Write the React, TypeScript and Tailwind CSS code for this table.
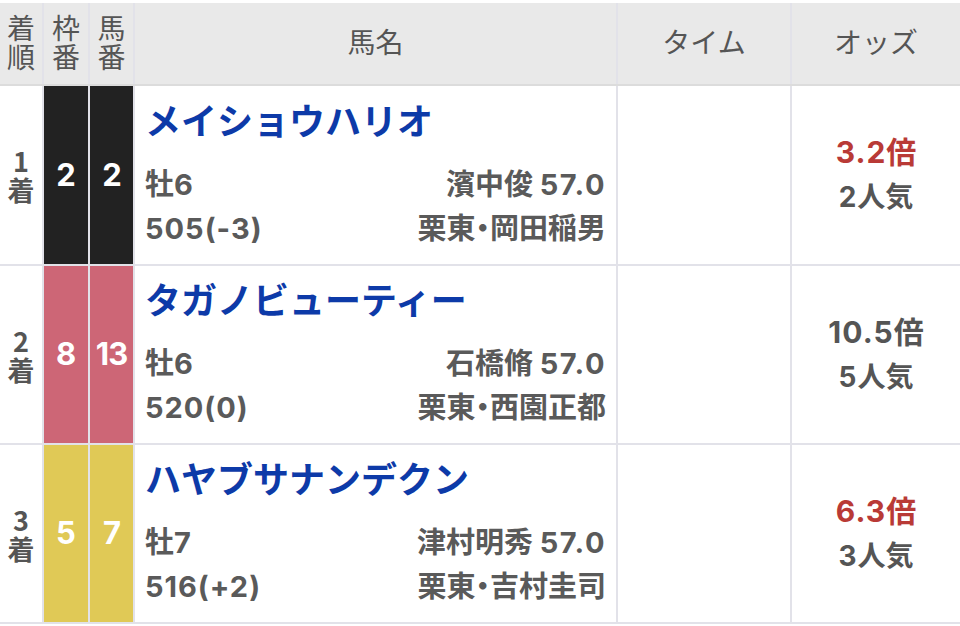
import React from 'react'

type Row = {
    rank: number
    frame: number
    num: number
    frameClass: string
    name: string
    sex: string
    weight: string
    jockey: string
    load: string
    stable: string
    trainer: string
    odds: string
    pop: number
    hot: boolean
    height: string
}

const rows: Row[] = [
    {
        rank: 1,
        frame: 2,
        num: 2,
        frameClass: 'bg-[#222222]',
        name: 'メイショウハリオ',
        sex: '牡6',
        weight: '505(-3)',
        jockey: '濱中俊',
        load: '57.0',
        stable: '栗東',
        trainer: '岡田稲男',
        odds: '3.2',
        pop: 2,
        hot: true,
        height: 'h-[180px]'
    },
    {
        rank: 2,
        frame: 8,
        num: 13,
        frameClass: 'bg-[#cd6676]',
        name: 'タガノビューティー',
        sex: '牡6',
        weight: '520(0)',
        jockey: '石橋脩',
        load: '57.0',
        stable: '栗東',
        trainer: '西園正都',
        odds: '10.5',
        pop: 5,
        hot: false,
        height: 'h-[179px]'
    },
    {
        rank: 3,
        frame: 5,
        num: 7,
        frameClass: 'bg-[#e0c956]',
        name: 'ハヤブサナンデクン',
        sex: '牡7',
        weight: '516(+2)',
        jockey: '津村明秀',
        load: '57.0',
        stable: '栗東',
        trainer: '吉村圭司',
        odds: '6.3',
        pop: 3,
        hot: true,
        height: 'h-[179px]'
    }
]

const font = "font-['Inter','Noto_Sans_CJK_JP',sans-serif]"

export default function App() {
    return (
        <div className={`w-[960px] h-[626px] bg-white pt-[3px] ${font}`}>
            {/* header */}
            <div className="flex h-[83px] bg-[#e9e9e9] border-b-2 border-[#dcdcdc] text-[28px] leading-[29px] text-[#555555] font-normal">
                <div className="w-[44px] shrink-0 border-r-2 border-[#e2e2e9] flex items-center justify-center text-center px-[7px]">
                    着順
                </div>
                <div className="w-[46px] shrink-0 border-r-2 border-[#e2e2e9] flex items-center justify-center text-center px-[8px]">
                    枠番
                </div>
                <div className="w-[45px] shrink-0 border-r-2 border-[#e2e2e9] flex items-center justify-center text-center px-[7px]">
                    馬番
                </div>
                <div className="w-[483px] shrink-0 border-r-2 border-[#e2e2e9] flex items-center justify-center">
                    馬名
                </div>
                <div className="w-[174px] shrink-0 border-r-2 border-[#e2e2e9] flex items-center justify-center">
                    タイム
                </div>
                <div className="flex-1 flex items-center justify-center">オッズ</div>
            </div>

            {rows.map((r) => (
                <div
                    key={r.rank}
                    className={`flex ${r.height} border-b-2 border-[#e2e2e9]`}
                >
                    <div className="w-[44px] shrink-0 border-r-2 border-[#e2e2e9] flex flex-col items-center justify-center font-['Noto_Sans_CJK_JP',sans-serif] text-[27px] leading-[29px] font-bold text-[#555555] text-center px-[8px]">
                        {`${r.rank}着`}
                    </div>
                    <div
                        className={`w-[46px] shrink-0 border-r-2 border-[#e2e2e9] flex items-center justify-center text-[31px] font-bold text-white ${r.frameClass}`}
                    >
                        {r.frame}
                    </div>
                    <div
                        className={`w-[45px] shrink-0 border-r-2 border-[#e2e2e9] flex items-center justify-center text-[31px] font-bold text-white tracking-[-1px] ${r.frameClass}`}
                    >
                        {r.num}
                    </div>
                    <div className="w-[483px] shrink-0 border-r-2 border-[#e2e2e9] flex flex-col justify-center pl-[10px] pr-[10px]">
                        <div className="text-[36px] leading-[44px] font-bold text-[#0d3aa8] mb-[19px]">
                            {r.name}
                        </div>
                        <div className="flex justify-between text-[29px] leading-[44px] font-bold text-[#5a5a5a]">
                            <span>{r.sex}</span>
                            <span>
                                {r.jockey}{' '}
                                <span className="tracking-[1.5px]">{r.load}</span>
                            </span>
                        </div>
                        <div className="flex justify-between text-[29px] leading-[44px] font-bold text-[#5a5a5a]">
                            <span className="tracking-[1px]">{r.weight}</span>
                            <span>
                                {r.stable}
                                <span className="[font-feature-settings:'palt']">・</span>
                                {r.trainer}
                            </span>
                        </div>
                    </div>
                    <div className="w-[174px] shrink-0 border-r-2 border-[#e2e2e9]" />
                    <div className="flex-1 flex flex-col items-center justify-center font-bold">
                        <div
                            className={`text-[30px] leading-[45px] ${r.hot ? 'text-[#b93a36]' : 'text-[#555555]'}`}
                        >
                            <span className="tracking-[1px]">{r.odds}</span>倍
                        </div>
                        <div className="text-[28px] leading-[45px] text-[#555555]">
                            <span className="tracking-[1px]">{r.pop}</span>人気
                        </div>
                    </div>
                </div>
            ))}
        </div>
    )
}
